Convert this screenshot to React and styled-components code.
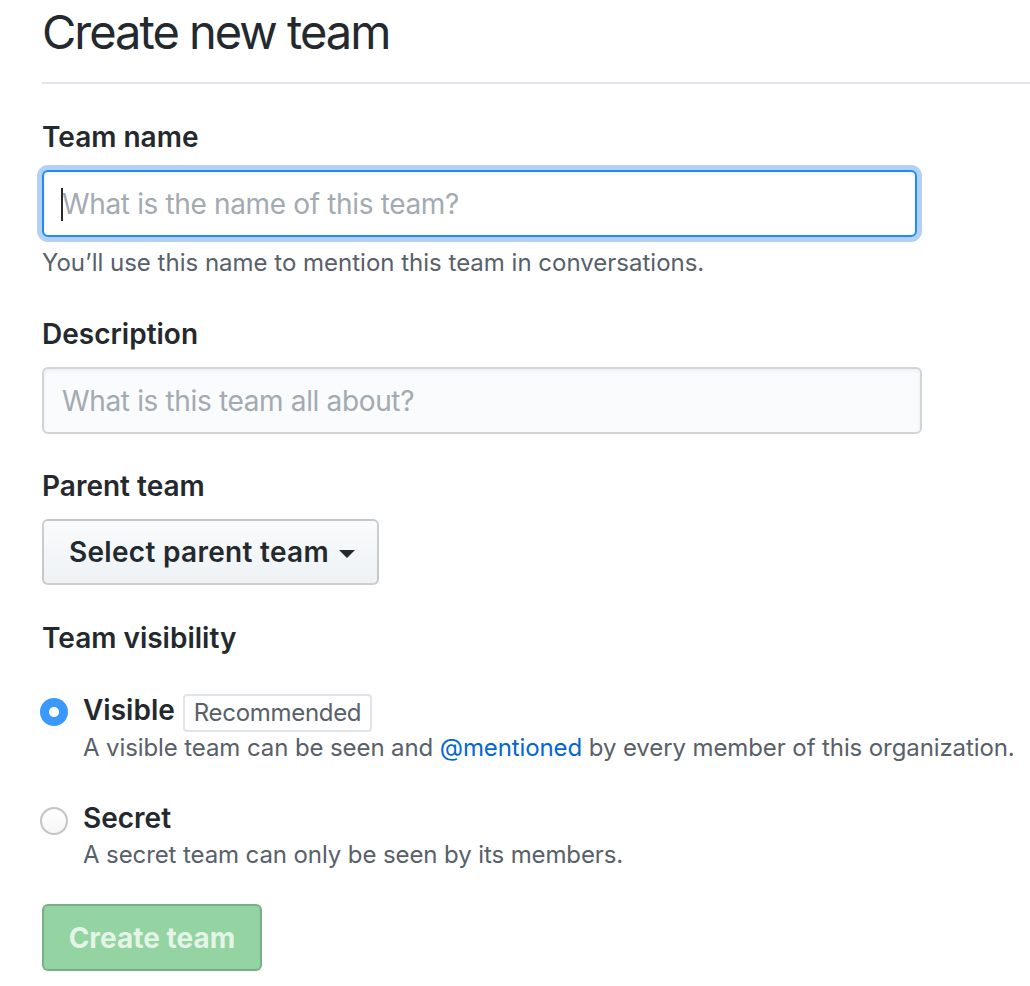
import React from "react";
import styled, { createGlobalStyle } from "styled-components";

const GlobalStyle = createGlobalStyle`
  html, body {
    margin: 0;
    padding: 0;
    background: #ffffff;
  }
  body {
    font-family: Inter, "Liberation Sans", Arial, sans-serif;
    color: #24292e;
  }
  * { box-sizing: border-box; }
`;

const Page = styled.div`
  padding-left: 42px;
`;

const Header = styled.h1`
  margin: 0;
  font-size: 47px;
  line-height: 60px;
  font-weight: 400;
  letter-spacing: -2px;
  color: #24292e;
  padding-top: 2px;
  padding-bottom: 20px;
  border-bottom: 2px solid #e1e4e8;
`;

const Form = styled.form`
  display: flex;
  flex-direction: column;
  padding-top: 32px;
`;

const Group = styled.div`
  display: flex;
  flex-direction: column;
  align-items: flex-start;
  margin-bottom: ${(p) => p.$gap ?? 32}px;
`;

const Label = styled.label`
  display: block;
  font-size: 28px;
  line-height: 42px;
  font-weight: 600;
  letter-spacing: 0;
  margin-bottom: 12px;
`;

const FieldWrap = styled.div`
  position: relative;
  width: ${(p) => p.$width}px;
`;

const Caret = styled.span`
  position: absolute;
  left: 19px;
  top: 18px;
  width: 2px;
  height: 33px;
  background: #24292e;
`;

const TextInput = styled.input`
  display: block;
  width: 100%;
  height: ${(p) => p.$height}px;
  padding: 0 18px;
  font-family: inherit;
  font-size: 28px;
  color: #24292e;
  letter-spacing: -0.35px;
  border: 2px solid ${(p) => (p.$focused ? "#2188ff" : "#d1d5da")};
  border-radius: 6px;
  background: ${(p) => (p.$focused ? "#ffffff" : "#fafbfc")};
  box-shadow: ${(p) =>
    p.$focused
      ? "inset 0 2px 4px rgba(27,31,35,0.06), 0 0 0 5px rgba(3,102,214,0.3)"
      : "inset 0 2px 4px rgba(27,31,35,0.06)"};
  outline: none;

  &::placeholder {
    color: #a3aab1;
  }
`;

const Note = styled.p`
  margin: 8px 0 0;
  font-size: 24px;
  line-height: 36px;
  color: #586069;
`;

const SelectButton = styled.button`
  display: inline-flex;
  align-items: center;
  gap: 10px;
  height: 66px;
  padding: 0 22px 0 25px;
  font-family: inherit;
  font-size: 28px;
  font-weight: 600;
  letter-spacing: 0.3px;
  color: #24292e;
  background: linear-gradient(180deg, #fafbfc 0%, #eff3f6 90%);
  border: 2px solid rgba(27, 31, 35, 0.2);
  border-radius: 6px;
  cursor: pointer;
`;

const DropCaret = styled.span`
  display: inline-block;
  width: 0;
  height: 0;
  margin-top: 3px;
  border-top: 8px solid #24292e;
  border-left: 8px solid transparent;
  border-right: 8px solid transparent;
`;

const VisibilityLabel = styled(Label)`
  margin-bottom: 29px;
`;

const Options = styled.div`
  display: flex;
  flex-direction: column;
  gap: 31px;
`;

const Option = styled.div`
  display: grid;
  grid-template-columns: 28px 1fr;
  column-gap: 15px;
  margin-left: -2px;
`;

const Radio = styled.input.attrs({ type: "radio" })`
  appearance: none;
  -webkit-appearance: none;
  margin: 10px 0 0;
  width: 28px;
  height: 28px;
  border-radius: 50%;
  border: 2px solid #c4c4c4;
  background: linear-gradient(180deg, #ffffff 0%, #f6f6f6 100%);
  box-shadow: inset 0 1px 1px rgba(0, 0, 0, 0.04);
  cursor: pointer;

  &:checked {
    border: none;
    background: radial-gradient(circle, #ffffff 0 4.5px, #3b99fc 5.5px);
    box-shadow: none;
  }
`;

const OptionBody = styled.div`
  display: flex;
  flex-direction: column;
`;

const OptionTitle = styled.div`
  display: flex;
  align-items: center;
  gap: 8px;
  font-size: 28px;
  line-height: 42px;
  font-weight: 600;
  letter-spacing: 0;
`;

const Badge = styled.span`
  display: inline-flex;
  align-items: center;
  height: 38px;
  padding: 0 9px;
  margin-top: 6px;
  font-size: 24px;
  font-weight: 400;
  letter-spacing: -0.3px;
  color: #586069;
  border: 2px solid #e1e4e8;
  border-radius: 4px;
`;

const OptionNote = styled.p`
  margin: -2px 0 0;
  font-size: 24px;
  line-height: 36px;
  letter-spacing: -0.1px;
  color: #586069;
`;

const Mention = styled.a`
  color: #0366d6;
  text-decoration: none;
`;

const SubmitButton = styled.button`
  align-self: flex-start;
  margin-top: 31px;
  height: 67px;
  width: 220px;
  font-family: inherit;
  font-size: 28px;
  font-weight: 700;
  letter-spacing: 0;
  color: rgba(255, 255, 255, 0.75);
  background: #94d3a2;
  border: 2px solid rgba(27, 31, 35, 0.2);
  border-radius: 6px;
  cursor: default;
`;

export default function App() {
  return (
    <>
      <GlobalStyle />
      <Page>
        <Header>Create new team</Header>
        <Form onSubmit={(e) => e.preventDefault()}>
          <Group>
            <Label htmlFor="team-name">Team name</Label>
            <FieldWrap $width={875}>
              <TextInput
                id="team-name"
                $height={67}
                $focused
                placeholder="What is the name of this team?"
              />
              <Caret />
            </FieldWrap>
            <Note>You’ll use this name to mention this team in conversations.</Note>
          </Group>

          <Group $gap={31}>
            <Label htmlFor="team-description">Description</Label>
            <FieldWrap $width={880}>
              <TextInput
                id="team-description"
                $height={67}
                placeholder="What is this team all about?"
              />
            </FieldWrap>
          </Group>

          <Group>
            <Label>Parent team</Label>
            <SelectButton type="button">
              Select parent team
              <DropCaret />
            </SelectButton>
          </Group>

          <div>
            <VisibilityLabel>Team visibility</VisibilityLabel>
            <Options>
              <Option>
                <Radio name="visibility" defaultChecked />
                <OptionBody>
                  <OptionTitle>
                    Visible
                    <Badge>Recommended</Badge>
                  </OptionTitle>
                  <OptionNote>
                    A visible team can be seen and <Mention href="#">@mentioned</Mention> by every
                    member of this organization.
                  </OptionNote>
                </OptionBody>
              </Option>
              <Option>
                <Radio name="visibility" />
                <OptionBody>
                  <OptionTitle>Secret</OptionTitle>
                  <OptionNote>A secret team can only be seen by its members.</OptionNote>
                </OptionBody>
              </Option>
            </Options>
          </div>

          <SubmitButton type="submit" disabled>
            Create team
          </SubmitButton>
        </Form>
      </Page>
    </>
  );
}
